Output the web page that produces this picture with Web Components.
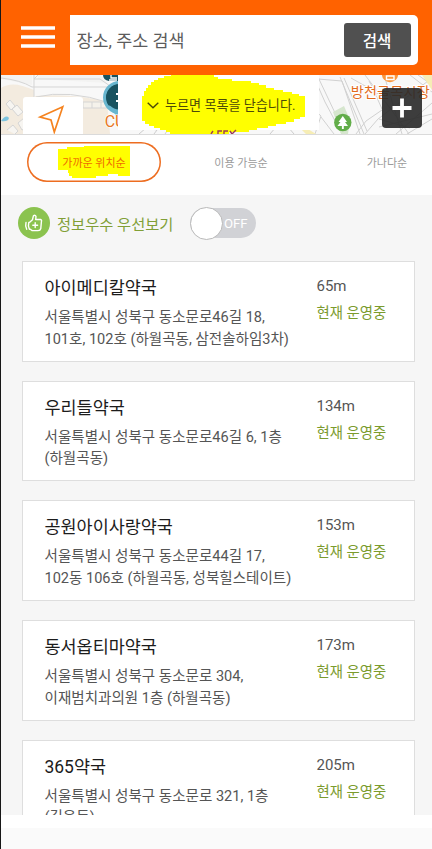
<!DOCTYPE html>
<html lang="ko">
<head>
<meta charset="utf-8">
<title>약국 찾기</title>
<style>
body { margin: 0; font-family: Roboto, "Noto Sans CJK KR", sans-serif; overflow: hidden; }
</style>
</head>
<body>
<pharmacy-app></pharmacy-app>
<script>
const define = (name, html) => {
  const t = document.createElement('template');
  t.innerHTML = '<style>*{box-sizing:border-box}</style>' + html;
  customElements.define(name, class extends HTMLElement {
    constructor() {
      super();
      this.attachShadow({ mode: 'open' }).append(t.content.cloneNode(true));
    }
  });
};

define('search-header', `
<style>
:host { display:flex; height:75px; background:#ff6200; padding:15px 15.4px 10px 20px; align-items:stretch; flex:none; }
.menu { width:34px; height:22px; margin:11px 15px 0 0; flex:none; }
.box { flex:1; height:50px; background:#fff; border-radius:0 5px 5px 0; display:flex; align-items:center; justify-content:space-between; padding:0 7px 0 6.5px; }
.hint { font-size:17.4px; color:#5c5c5c; white-space:nowrap; line-height:50px; padding-top:2px; }
.btn { width:67px; height:34px; border-radius:3px; background:#505050; color:#fff; font-size:15.6px; font-weight:500; line-height:38px; text-align:center; }
</style>
<svg class="menu" viewBox="0 0 34 22"><path d="M0 2H34M0 11H34M0 20H34" stroke="#fff" stroke-width="3.7"/></svg>
<div class="box"><span class="hint">장소, 주소 검색</span><span class="btn">검색</span></div>
`);

define('map-strip', `
<style>
:host { display:block; position:relative; height:60px; border-bottom:1px solid #dadada; overflow:hidden; flex:none; background:#f8f8f8; }
.map { display:block; width:431px; height:59px; }
.over { position:absolute; }
.locate { left:22px; top:22px; width:60px; height:37px; background:#fff; border-radius:3px 3px 0 0; }
.close { left:117px; top:0; width:201px; height:55px; background:#fff; }
.label { left:141px; top:0; width:165px; height:60px; display:flex; align-items:center; padding-left:5px; }
.mark { position:absolute; left:0; top:0; }
.label span { position:relative; font-size:13.1px; color:#4c4a08; white-space:nowrap; margin-left:6px; line-height:20px; padding-top:1px; }
.chev { position:relative; flex:none; }
.plus { left:381px; top:13px; width:40px; height:40px; background:rgba(42,42,42,.91); border-radius:4px; }
svg { display:block; }
</style>
<svg class="map" viewBox="1 75 431 59" font-family="Roboto, 'Noto Sans CJK KR', sans-serif">
  <path d="M1 88Q12 80 34 90L35 134H1Z M35 96Q75 93 107 102L110 134H35Z" fill="#f3ebdf"/>
  <path d="M1 75H32V85L1 79Z M38 75H100L107 83L38 79Z" fill="#f3f3f2"/>
  <g fill="none" stroke="#d5d5d5" stroke-width="1">
    <path d="M1 78Q20 80 32 87H110M38 75L34 79H100L110 86M34 97V75M36 97Q68 89 110 103M34 97V134"/>
    <path d="M83 102H112V108H83ZM92 102V108M101 102V108" fill="#f5f2eb"/>
    <path d="M6 104L10 100L15 106L11 110ZM12 109L17 105L23 112L18 116ZM7 130L13 125L18 131L15 134M18 123L24 118L30 126L22 130Z" fill="#f7f5f1"/>
  </g>
  <path d="M1 121Q6 114 9 118Q8 122 1 121Z" fill="#7dc4df"/>
  <path d="M139 134L146 128L157 130L154 134M165 134L169 128M177 134L180 128M191 134L193 129H205M270 134L276 127H288L294 134" fill="none" stroke="#ccc"/>
  <path d="M198 134L200 128" stroke="#22b8c0" stroke-width="1.5"/>
  <g fill="none" stroke="#d1d1d1" stroke-width="1">
    <path d="M313 75L325 102L342 134M318 77L345 134M318 79L342 81L360 134M340 77L364 134M344 78L367 131M351 78L374 91L382 109M384 75L402 134M410 75L432 92M418 75L432 85"/>
    <path d="M356 134L366 121L382 110M365 134L378 119L432 78M379 127L432 114M396 134L432 103M407 134L432 119M365 75L387 104L409 134"/>
    <path d="M309 105L321 116L315 134M321 117L334 134M369 81L376 94L386 91M379 119L410 128"/>
  </g>
  <path d="M422 75L432 90V75ZM303 126L316 134H306L301 129Z" fill="#f6edb5"/>
  <path d="M333 112L344 106L350 120L348 134H341Z" fill="#d6e6ce"/>
  <circle cx="342.8" cy="122.5" r="8.7" fill="#62ad49"/>
  <path d="M342.8 116L338.5 122H340.5L337.5 126H341.9V129H343.8V126H348L345 122H347Z" fill="#fff"/>
  <circle cx="390" cy="74" r="8.2" fill="#fb963b"/><path d="M386.5 76V79.5H394V76Z" fill="none" stroke="#fff" stroke-width="1.4"/>
  <text x="350.7" y="97" font-size="14.2" fill="#e36b1d" stroke="#fff" stroke-width="2" paint-order="stroke" textLength="79">방천골목시장</text>
  <path d="M103 75H121V81H109Q103 80 103 75Z" fill="#185360"/>
  <path d="M111 75V78H117M109 80H117" stroke="#fff" stroke-width="1.3" fill="none"/>
  <circle cx="119.5" cy="97.5" r="15" fill="#185360" stroke="#68b6cf" stroke-width="3"/><path d="M107 106L118 117V104Z" fill="#68b6cf"/>
  <circle cx="119" cy="97" r="12.5" fill="#185360"/><path d="M116 94H119M116 101H119" stroke="#fff" stroke-width="2"/>
  <text x="104.7" y="127" font-size="16" fill="#e87825" stroke="#fff" stroke-width="1.2" paint-order="stroke">CU</text>
</svg>
<div class="over locate"><svg width="60" height="37" viewBox="23 97 60 37"><path d="M62.8 106.7L40 117L51 120L54.3 132Z" fill="none" stroke="#f5831f" stroke-width="1.7"/></svg></div>
<div class="over close"></div>
<div class="over label">
  <svg class="mark" width="165" height="60" viewBox="142 75 165 60"><path d="M142 96H144V91H146V88H148V85H151V82H154V80H158V78H164V76H171V75H214V77H218V79H232V81H251V83H259V85H266V88H274V90H283V92H292V94H299V96H305V117H300V119H294V122H286V124H276V126H268V128H257V130H249V132H229V134H170V132H166V130H160V128H154V126H149V124H145V121H142Z" fill="#ff0"/><g fill="none" stroke="#9b3b58" stroke-width="1.4"><path d="M211 134L213 131M218 134V131H222M224 134V131H228M230 131L232 134L236 130"/></g></svg>
  <svg class="chev" width="12" height="7" viewBox="0 0 12 7"><path d="M.7 .8L6 5.7L11.3 .8" fill="none" stroke="#4c4a08" stroke-width="1.4"/></svg>
  <span>누르면 목록을 닫습니다.</span>
</div>
<div class="over plus"><svg width="40" height="40" viewBox="0 0 40 40"><path d="M20 10.5V29.5M10.5 20H29.5" stroke="#fff" stroke-width="3.8"/></svg></div>
`);

define('sort-tabs', `
<style>
:host { display:grid; grid-template-columns:26px 134px 160px 1fr; height:60px; background:#fff; flex:none; align-items:start; color:#9b9b9b; font-size:11px; text-align:center; white-space:nowrap; }
.on { grid-column:2; margin-top:7px; height:40px; box-shadow:inset 0 0 0 1.5px #ed6d20; border-radius:20px; color:#ee6b00; display:grid; place-items:center; }
.on svg, .on span { grid-area:1/1; }
.on span { line-height:16px; margin-top:3px; }
.t { line-height:16px; margin-top:21px; }
.t:last-child { padding-left:20px; }
</style>
<div class="on"><svg width="72" height="32" viewBox="0 0 72 32"><path d="M0 3H9V1H26V0H72V30H60V28H50V30H38V32H14V30H11V27H10V24H0Z" fill="#ff0"/></svg><span>가까운 위치순</span></div>
<div class="t">이용 가능순</div><div class="t">가나다순</div>
`);

define('priority-filter', `
<style>
:host { display:flex; align-items:center; height:56px; padding-left:16.5px; flex:none; }
.name { color:#819f36; font-size:15.3px; width:116px; margin:3px 16.5px 0 7.5px; white-space:nowrap; line-height:24px; }
.toggle { width:66.5px; height:30px; border-radius:15px; background:#d1d2d6; display:flex; align-items:center; color:#fff; font-size:13.2px; }
.toggle b { font-weight:400; padding-top:1px; }
.knob { width:33px; height:33px; flex:none; border-radius:50%; background:#fff; border:1px solid #b9b9b9; margin-right:1.5px; }
</style>
<svg width="32" height="32" viewBox="0 0 32 32"><circle cx="16" cy="16" r="16" fill="#8bc34f"/>
<g fill="none" stroke="#fff" stroke-width="1.4" stroke-linecap="round" stroke-linejoin="round"><path d="M11.7 15.2L14.5 12.7L15.4 8.8Q17.3 7.5 18 9.5L17.7 12.5H22.5Q24 13 23.4 14.7L22.8 21.5Q22.3 23.6 20 23.6H14.2L11.9 22"/><path d="M8 15.5Q7.1 18.5 8.7 22.3M10.8 15.5Q9.8 18.5 11.4 22.3M17.2 15.8V20.6M14.8 18.2H19.6"/></g></svg>
<span class="name">정보우수 우선보기</span>
<div class="toggle"><span class="knob"></span><b>OFF</b></div>
`);

define('pharmacy-card', `
<style>
:host { display:flex; height:100.7px; background:#fff; border:1px solid #dedede; padding:14px 0 0 21.5px; flex:none; white-space:nowrap; }
.info { width:272px; flex:none; }
.title { font-size:17.45px; line-height:24px; color:#1c1c1c; }
.addr { font-size:14.55px; line-height:21.4px; color:#555; margin-top:7px; }
.dist { font-size:15px; line-height:20px; color:#555; }
.state { font-size:14.4px; line-height:20px; color:#7b9b2d; margin-top:8px; }
</style>
<div class="info"><div class="title"><slot name="name"></slot></div><div class="addr"><slot></slot></div></div>
<div><div class="dist"><slot name="distance"></slot></div><div class="state">현재 운영중</div></div>
`);

define('pharmacy-app', `
<style>
:host { display:flex; flex-direction:column; width:432px; height:849px; border-left:1px solid #171717; background:#fafafa; }
.panel { height:620px; background:#f6f6f6; overflow:hidden; display:flex; flex-direction:column; flex:none; }
.list { display:flex; flex-direction:column; gap:19px; padding:10.1px 18px 0 21px; }
.foot { height:13px; background:#fff; flex:none; }
</style>
<search-header></search-header>
<map-strip></map-strip>
<sort-tabs></sort-tabs>
<div class="panel">
<priority-filter></priority-filter>
<div class="list">
<pharmacy-card><span slot="name">아이메디칼약국</span><span slot="distance">65m</span>서울특별시 성북구 동소문로46길 18,<br>101호, 102호 (하월곡동, 삼전솔하임3차)</pharmacy-card>
<pharmacy-card><span slot="name">우리들약국</span><span slot="distance">134m</span>서울특별시 성북구 동소문로46길 6, 1층<br>(하월곡동)</pharmacy-card>
<pharmacy-card><span slot="name">공원아이사랑약국</span><span slot="distance">153m</span>서울특별시 성북구 동소문로44길 17,<br>102동 106호 (하월곡동, 성북힐스테이트)</pharmacy-card>
<pharmacy-card><span slot="name">동서옵티마약국</span><span slot="distance">173m</span>서울특별시 성북구 동소문로 304,<br>이재범치과의원 1층 (하월곡동)</pharmacy-card>
<pharmacy-card><span slot="name">365약국</span><span slot="distance">205m</span>서울특별시 성북구 동소문로 321, 1층<br>(길음동)</pharmacy-card>
</div>
</div>
<div class="foot"></div>
`);
</script>
</body>
</html>
